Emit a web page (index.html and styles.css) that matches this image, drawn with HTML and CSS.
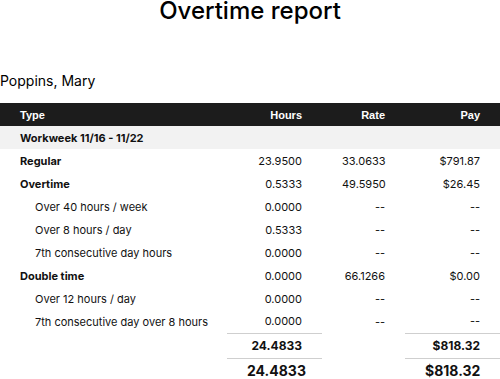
FILE: index.html
```html
<!DOCTYPE html>
<html>
<head>
<meta charset="utf-8">
<link rel="stylesheet" href="styles.css">
</head>
<body>
<h1 class="title">Overtime report</h1>
<h2 class="name">Poppins, Mary</h2>
<table class="report">
  <colgroup>
    <col class="c-type"><col class="c-hours"><col class="c-rate"><col class="c-pay">
  </colgroup>
  <thead>
    <tr class="head">
      <th class="type">Type</th><th class="num">Hours</th><th class="num">Rate</th><th class="num">Pay</th>
    </tr>
  </thead>
  <tbody>
    <tr class="week"><td class="type" colspan="4">Workweek 11/16 - 11/22</td></tr>
    <tr class="main"><td class="type">Regular</td><td class="num">23.9500</td><td class="num">33.0633</td><td class="num">$791.87</td></tr>
    <tr class="main"><td class="type">Overtime</td><td class="num">0.5333</td><td class="num">49.5950</td><td class="num">$26.45</td></tr>
    <tr class="sub"><td class="type">Over 40 hours / week</td><td class="num">0.0000</td><td class="num">--</td><td class="num">--</td></tr>
    <tr class="sub"><td class="type">Over 8 hours / day</td><td class="num">0.5333</td><td class="num">--</td><td class="num">--</td></tr>
    <tr class="sub"><td class="type">7th consecutive day hours</td><td class="num">0.0000</td><td class="num">--</td><td class="num">--</td></tr>
    <tr class="main"><td class="type">Double time</td><td class="num">0.0000</td><td class="num">66.1266</td><td class="num">$0.00</td></tr>
    <tr class="sub"><td class="type">Over 12 hours / day</td><td class="num">0.0000</td><td class="num">--</td><td class="num">--</td></tr>
    <tr class="sub"><td class="type">7th consecutive day over 8 hours</td><td class="num">0.0000</td><td class="num">--</td><td class="num">--</td></tr>
    <tr class="total"><td></td><td class="num line">24.4833</td><td></td><td class="num line">$818.32</td></tr>
    <tr class="grand"><td></td><td class="num line">24.4833</td><td></td><td class="num line">$818.32</td></tr>
  </tbody>
</table>
</body>
</html>
```

FILE: styles.css
```css
html, body {
  margin: 0;
  padding: 0;
  background: #fff;
  color: #111;
  font-family: Inter, "Liberation Sans", sans-serif;
}
.title {
  margin: 0;
  font-size: 24px;
  line-height: 22px;
  font-weight: 500;
  text-align: center;
  color: #000;
}
.name {
  margin: 50px 0 13px;
  font-size: 14px;
  line-height: 18px;
  font-weight: 400;
  color: #000;
}
.report {
  width: 500px;
  border-collapse: collapse;
  table-layout: fixed;
  font-size: 11px;
}
.c-type { width: 227px; }
.c-hours { width: 95px; }
.c-rate { width: 83px; }
.c-pay { width: 95px; }
.report th, .report td {
  height: 23px;
  padding: 0 20px;
  box-sizing: border-box;
  white-space: nowrap;
}
.report .num { text-align: right; }
.report .type { text-align: left; }
.head th {
  background: #1c1c1c;
  color: #fff;
  font-family: "Liberation Sans", Arial, sans-serif;
  font-weight: 700;
  font-size: 11px;
}
.week td {
  background: #f2f2f2;
  font-weight: 700;
}
.main .type { font-weight: 700; }
.sub .type { padding-left: 35px; }
.total td { height: 25px; font-weight: 700; font-size: 12px; }
.grand td { height: 25px; font-weight: 700; font-size: 14px; }
.line { border-top: 1px solid #cfcfcf; }
```
